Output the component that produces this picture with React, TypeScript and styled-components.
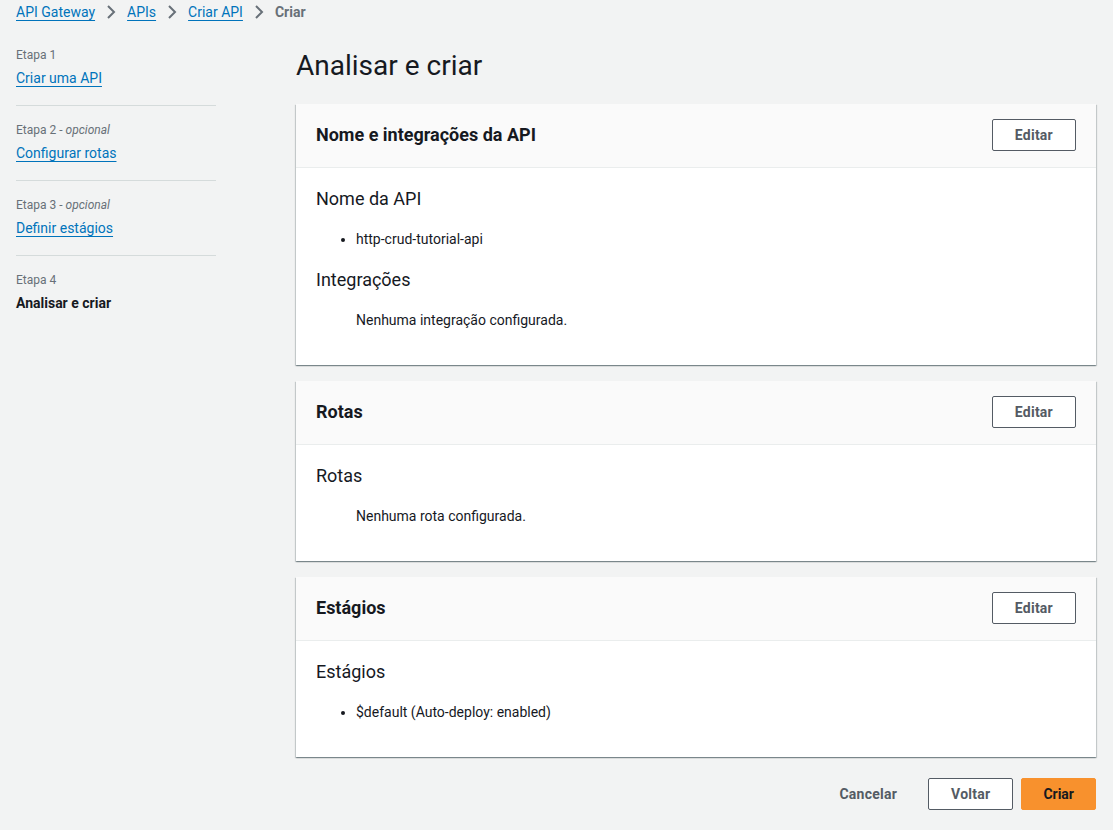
import React from "react";
import styled, { createGlobalStyle } from "styled-components";

const GlobalStyle = createGlobalStyle`
  html, body {
    margin: 0;
    padding: 0;
    background: #f2f3f3;
    font-family: Roboto, "Liberation Sans", Arial, sans-serif;
    color: #16191f;
  }
  * { box-sizing: border-box; }
`;

const Page = styled.div`
  min-height: 830px;
  padding: 0 17px 20px 16px;
`;

const Breadcrumbs = styled.nav`
  display: flex;
  align-items: center;
  height: 24px;
  font-size: 14px;
  line-height: 20px;
`;

const CrumbLink = styled.a`
  color: #0073bb;
  text-decoration: underline;
  text-underline-offset: 3px;
  cursor: pointer;
`;

const CrumbCurrent = styled.span`
  color: #687078;
  font-weight: 700;
`;

const Chevron = styled.svg`
  width: 16px;
  height: 16px;
  margin: 0 8px;
  color: #687078;
`;

const Layout = styled.div`
  display: grid;
  grid-template-columns: 200px 1fr;
  column-gap: 80px;
  margin-top: 16px;
`;

const StepNav = styled.ul`
  list-style: none;
  margin: 0;
  padding: 0;
`;

const Step = styled.li<{ $last?: boolean }>`
  padding: 16px 0 17px;
  border-bottom: ${(p) => (p.$last ? "none" : "1px solid #d5dbdb")};
  &:first-child {
    padding-top: 7px;
  }
`;

const StepLabel = styled.div`
  font-size: 12px;
  line-height: 16px;
  color: #687078;
  margin-bottom: 5px;
  em {
    font-style: italic;
  }
`;

const StepLink = styled.a`
  font-size: 14px;
  line-height: 20px;
  color: #0073bb;
  text-decoration: underline;
  text-underline-offset: 3px;
  cursor: pointer;
`;

const StepCurrent = styled.span`
  font-size: 14px;
  line-height: 20px;
  font-weight: 700;
  color: #16191f;
`;

const Main = styled.main`
  display: flex;
  flex-direction: column;
`;

const Title = styled.h1`
  margin: 8px 0 20px;
  font-size: 28px;
  line-height: 36px;
  font-weight: 400;
  color: #16191f;
`;

const Cards = styled.div`
  display: flex;
  flex-direction: column;
  gap: 16px;
`;

const Card = styled.section`
  background: #fff;
  box-shadow: 0 1px 1px 0 rgba(0, 28, 36, 0.3),
    1px 1px 1px 0 rgba(0, 28, 36, 0.15),
    -1px 1px 1px 0 rgba(0, 28, 36, 0.15);
`;

const CardHeader = styled.header`
  display: flex;
  align-items: center;
  justify-content: space-between;
  padding: 15px 20px 16px;
  background: #fafafa;
  border-bottom: 1px solid #eaeded;
`;

const CardTitle = styled.h2`
  margin: 0;
  font-size: 18px;
  line-height: 22px;
  font-weight: 700;
  color: #16191f;
`;

const Button = styled.button<{ $variant?: "normal" | "primary" | "link" }>`
  height: 32px;
  padding: ${(p) => (p.$variant === "primary" ? "4px 21px" : "4px 22px")};
  border-radius: 2px;
  font-family: inherit;
  font-size: 14px;
  line-height: 22px;
  font-weight: 700;
  letter-spacing: ${(p) => (p.$variant === "primary" ? "0" : "0.25px")};
  cursor: pointer;
  border: 1px solid
    ${(p) =>
      p.$variant === "primary"
        ? "#f8912d"
        : p.$variant === "link"
        ? "transparent"
        : "#545b64"};
  background: ${(p) =>
    p.$variant === "primary" ? "#f8912d" : p.$variant === "link" ? "transparent" : "#fff"};
  color: ${(p) => (p.$variant === "primary" ? "#16191f" : "#545b64")};
`;

const CardBody = styled.div`
  padding: 20px 20px 35px;
`;

const FieldTitle = styled.h3`
  margin: 0 0 19px;
  font-size: 18px;
  line-height: 22px;
  font-weight: 400;
  color: #16191f;
`;

const ValueList = styled.ul<{ $plain?: boolean }>`
  margin: 0 0 20px;
  padding-left: 40px;
  list-style: ${(p) => (p.$plain ? "none" : "disc")};
  font-size: 14px;
  line-height: 20px;
  color: #16191f;
  &:last-child {
    margin-bottom: 0;
  }
`;

const Footer = styled.div`
  display: flex;
  justify-content: flex-end;
  gap: 8px;
  margin-top: 21px;
`;

const ChevronIcon = () => (
  <Chevron viewBox="0 0 16 16" fill="none">
    <path d="M5 2l6 6-6 6" stroke="currentColor" strokeWidth="2" />
  </Chevron>
);

type Field = { title: string; items: string[]; plain?: boolean };
type Section = { title: string; fields: Field[] };

const sections: Section[] = [
  {
    title: "Nome e integrações da API",
    fields: [
      { title: "Nome da API", items: ["http-crud-tutorial-api"] },
      { title: "Integrações", items: ["Nenhuma integração configurada."], plain: true },
    ],
  },
  {
    title: "Rotas",
    fields: [{ title: "Rotas", items: ["Nenhuma rota configurada."], plain: true }],
  },
  {
    title: "Estágios",
    fields: [{ title: "Estágios", items: ["$default (Auto-deploy: enabled)"] }],
  },
];

export default function App() {
  return (
    <>
      <GlobalStyle />
      <Page>
        <Breadcrumbs>
          <CrumbLink>API Gateway</CrumbLink>
          <ChevronIcon />
          <CrumbLink>APIs</CrumbLink>
          <ChevronIcon />
          <CrumbLink>Criar API</CrumbLink>
          <ChevronIcon />
          <CrumbCurrent>Criar</CrumbCurrent>
        </Breadcrumbs>
        <Layout>
          <StepNav>
            <Step>
              <StepLabel>Etapa 1</StepLabel>
              <StepLink>Criar uma API</StepLink>
            </Step>
            <Step>
              <StepLabel>
                Etapa 2 - <em>opcional</em>
              </StepLabel>
              <StepLink>Configurar rotas</StepLink>
            </Step>
            <Step>
              <StepLabel>
                Etapa 3 - <em>opcional</em>
              </StepLabel>
              <StepLink>Definir estágios</StepLink>
            </Step>
            <Step $last>
              <StepLabel>Etapa 4</StepLabel>
              <StepCurrent>Analisar e criar</StepCurrent>
            </Step>
          </StepNav>
          <Main>
            <Title>Analisar e criar</Title>
            <Cards>
              {sections.map((s) => (
                <Card key={s.title}>
                  <CardHeader>
                    <CardTitle>{s.title}</CardTitle>
                    <Button>Editar</Button>
                  </CardHeader>
                  <CardBody>
                    {s.fields.map((f) => (
                      <React.Fragment key={f.title}>
                        <FieldTitle>{f.title}</FieldTitle>
                        <ValueList $plain={f.plain}>
                          {f.items.map((i) => (
                            <li key={i}>{i}</li>
                          ))}
                        </ValueList>
                      </React.Fragment>
                    ))}
                  </CardBody>
                </Card>
              ))}
            </Cards>
            <Footer>
              <Button $variant="link">Cancelar</Button>
              <Button>Voltar</Button>
              <Button $variant="primary">Criar</Button>
            </Footer>
          </Main>
        </Layout>
      </Page>
    </>
  );
}
